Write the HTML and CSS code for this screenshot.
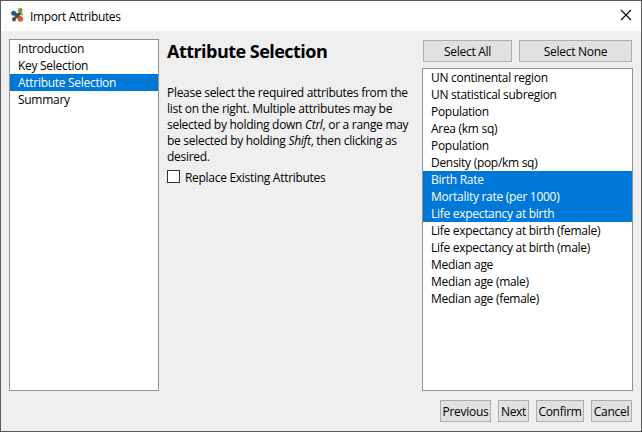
FILE: index.html
```html
<!DOCTYPE html>
<html lang="en">
<head>
<meta charset="utf-8">
<title>Import Attributes</title>
<link rel="stylesheet" href="styles.css">
</head>
<body>
<div class="window">
  <header class="titlebar">
    <svg class="app-icon" width="14" height="14" viewBox="0 0 14 14">
      <path d="M2.5 5l5 3 2-5M7 8l3 3M7 8l-5 3" stroke="#6b5a50" stroke-width="3" fill="none"/>
      <circle cx="2.6" cy="5.2" r="2.5" fill="#1e5f96"/>
      <circle cx="9.3" cy="2.4" r="2.3" fill="#6ea03c"/>
      <circle cx="9.4" cy="11" r="2.8" fill="#d2602a"/>
      <circle cx="3" cy="11.4" r="2" fill="#5c4a46"/>
      <circle cx="6.4" cy="7.2" r="2.2" fill="#574a45"/>
      <circle cx="11" cy="6.2" r="1.2" fill="#91ab78"/>
    </svg>
    <h1 class="title">Import Attributes</h1>
    <svg class="close" width="10" height="10" viewBox="0 0 10 10"><path d="M0 0l10 10M10 0L0 10" stroke="#000" stroke-width="1.1"/></svg>
  </header>
  <main class="content">
    <ul class="list steps">
      <li>Introduction</li>
      <li>Key Selection</li>
      <li class="selected">Attribute Selection</li>
      <li>Summary</li>
    </ul>
    <section class="page">
      <h2 class="heading">Attribute Selection</h2>
      <p class="help">Please select the required attributes from the<br>list on the right. Multiple attributes may be<br>selected by holding down <i>Ctrl</i>, or a range may<br>be selected by holding <i>Shift</i>, then clicking as<br>desired.</p>
      <label class="check"><span class="box"></span><span>Replace Existing Attributes</span></label>
    </section>
    <section class="attributes">
      <div class="select-actions">
        <button class="all">Select All</button>
        <button class="none">Select None</button>
      </div>
      <ul class="list">
        <li>UN continental region</li>
        <li>UN statistical subregion</li>
        <li>Population</li>
        <li>Area (km sq)</li>
        <li>Population</li>
        <li>Density (pop/km sq)</li>
        <li class="selected">Birth Rate</li>
        <li class="selected">Mortality rate (per 1000)</li>
        <li class="selected">Life expectancy at birth</li>
        <li>Life expectancy at birth (female)</li>
        <li>Life expectancy at birth (male)</li>
        <li>Median age</li>
        <li>Median age (male)</li>
        <li>Median age (female)</li>
      </ul>
    </section>
  </main>
  <footer class="actions">
    <button class="previous">Previous</button>
    <button class="next">Next</button>
    <button class="confirm">Confirm</button>
    <button class="cancel">Cancel</button>
  </footer>
</div>
</body>
</html>
```
FILE: styles.css
```css
* { box-sizing: border-box; }
body {
  margin: 0;
  font: 12px/17px "Open Sans", "Noto Sans", sans-serif;
  letter-spacing: -0.29px;
  color: #000;
}
.window {
  width: 642px;
  height: 432px;
  display: flex;
  flex-direction: column;
  background: #efefef;
  border: 1px solid #5b5b5b;
  overflow: hidden;
}
.titlebar {
  height: 30px;
  flex: none;
  display: flex;
  align-items: center;
  padding: 0 10px;
  background: #fff;
}
.app-icon { margin-bottom: 2px; }
.title {
  flex: 1;
  margin: 0 0 0 5px;
  font-size: 12px;
  font-weight: 400;
  letter-spacing: -0.37px;
}
.close { overflow: visible; margin-bottom: 2px; }
.content {
  height: 360px;
  flex: none;
  display: flex;
  padding: 8px 8px 0;
}
.list {
  margin: 0;
  padding: 0;
  list-style: none;
  background: #fff;
  border: 1px solid #919191;
}
.list li {
  height: 17px;
  padding-left: 8px;
  white-space: nowrap;
}
.list .selected { background: #0078d7; color: #fff; }
.steps { width: 150px; height: 352px; }
.page {
  width: 263px;
  padding-left: 8px;
  white-space: nowrap;
}
.heading {
  margin: 0;
  font-size: 18px;
  line-height: 25px;
  font-weight: 700;
  letter-spacing: -0.53px;
}
.help {
  margin: 21px 0 0;
  line-height: 16px;
}
.check {
  display: flex;
  gap: 5px;
  height: 17px;
  margin-top: 4px;
}
.box {
  width: 13px;
  height: 13px;
  margin-top: 1px;
  background: #fff;
  border: 1px solid #333;
}
.attributes {
  width: 211px;
  display: flex;
  flex-direction: column;
}
.attributes .list { height: 323px; margin-top: 6px; }
.select-actions {
  display: flex;
  gap: 7px;
  padding: 1px 1px 0;
}
button {
  height: 22px;
  padding: 0;
  font: inherit;
  letter-spacing: inherit;
  color: inherit;
  white-space: nowrap;
  background: #e1e1e1;
  border: 1px solid #adadad;
}
.all { width: 89px; }
.none { width: 113px; }
.actions {
  display: flex;
  justify-content: flex-end;
  gap: 7px;
  padding: 9px 9px 0 0;
}
.previous { width: 51px; }
.next { width: 31px; }
.confirm { width: 48px; }
.cancel { width: 41px; }
```
